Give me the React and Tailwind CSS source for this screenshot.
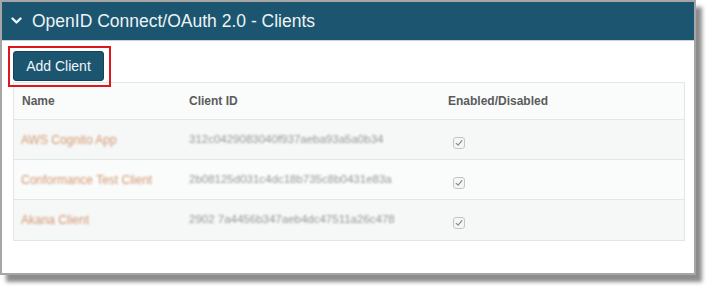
import React from 'react';

const clients = [
  { name: 'AWS Cognito App', id: '312c0429083040f937aeba93a5a0b34', enabled: true },
  { name: 'Conformance Test Client', id: '2b08125d031c4dc18b735c8b0431e83a', enabled: true },
  { name: 'Akana Client', id: '2902 7a4456b347aeb4dc47511a26c478', enabled: true },
];

const Check = () => (
  <span className="flex h-[12px] w-[12px] items-center justify-center rounded-[3px] border border-[#c4c6c6] bg-[#f4f5f5]">
    <svg width="8" height="8" viewBox="0 0 8 8" fill="none">
      <path d="M1.2 4.3 L3.1 6.2 L6.9 1.6" stroke="#8a8c8c" strokeWidth="1.2" strokeLinecap="round" strokeLinejoin="round" />
    </svg>
  </span>
);

const App = () => {
  return (
    <div className="h-[291px] w-[712px] bg-white" style={{ fontFamily: '"Liberation Sans", Arial, sans-serif' }}>
      <div className="relative h-[275px] w-[696px] border-2 border-[#a6a6a6] bg-white shadow-[6px_7px_4px_rgba(0,0,0,0.45)]">
        <div className="flex h-[39px] items-center border-b border-[#c9d2d6] bg-[#1b5570] pl-[9px]">
          <svg width="11" height="8" viewBox="0 0 11 8" className="mr-[10px]">
            <path d="M1.5 1.5 L5.5 5.5 L9.5 1.5" stroke="#eef3f5" strokeWidth="2.4" fill="none" strokeLinecap="round" strokeLinejoin="round" />
          </svg>
          <span className="text-[17.5px] text-[#eef3f5]">OpenID Connect/OAuth 2.0 - Clients</span>
        </div>

        <div className="pl-[11px] pt-[10px]">
          <button className="flex h-[30px] w-[91px] items-center justify-center rounded-[3px] border border-[#134559] bg-[#1b5570] text-[14px] text-[#f1f5f7]">
            Add Client
          </button>

          <div className="mt-[1px] w-[672px] border border-[#e4e6e6]">
            <div className="flex h-[37px] items-center border-b border-[#e4e6e6] bg-[#fafbfb] text-[12px] font-bold text-[#5a5c5c]">
              <div className="w-[175px] pl-[8px]">Name</div>
              <div className="w-[259px]">Client ID</div>
              <div>Enabled/Disabled</div>
            </div>
            {clients.map((c, i) => (
              <div
                key={c.id}
                className={`flex h-[40px] items-center text-[12px] ${i < clients.length - 1 ? 'border-b border-[#e4e6e6]' : ''} ${i % 2 === 0 ? 'bg-[#f6f7f7]' : 'bg-[#fafbfb]'}`}
              >
                <div className="w-[175px] pl-[7px] text-[#d39a72] blur-[1px]">{c.name}</div>
                <div className="w-[264px] text-[11.5px] text-[#959797] blur-[1px]">{c.id}</div>
                <div className="pt-[6px]"><Check /></div>
              </div>
            ))}
          </div>
        </div>

        {/* annotation box around the button */}
        <div className="absolute left-[6px] top-[44px] h-[41px] w-[103px] border-2 border-[#e0161e]" />
      </div>
    </div>
  );
};

export default App;
